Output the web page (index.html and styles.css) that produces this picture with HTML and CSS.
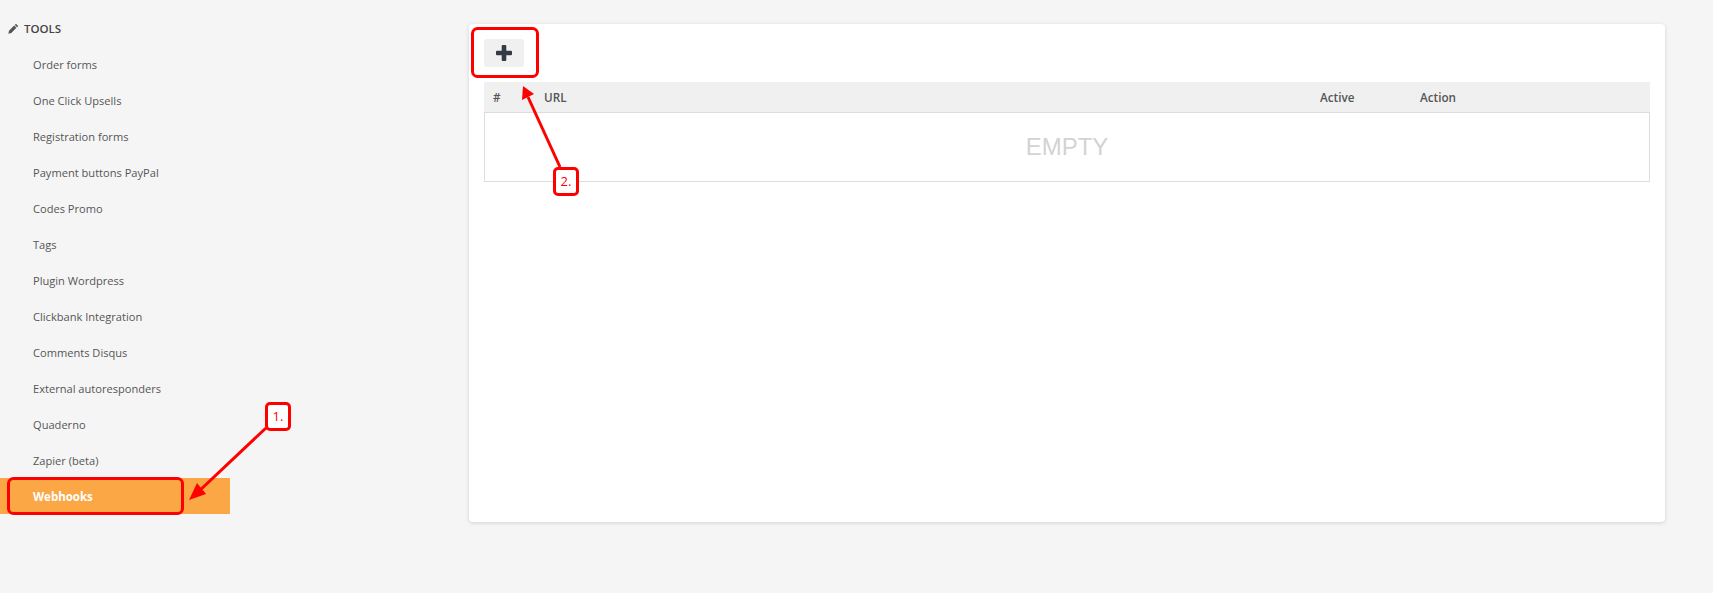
FILE: index.html
```html
<!DOCTYPE html>
<html lang="en">
<head>
  <meta charset="UTF-8">
  <title>Webhooks</title>
  <link rel="stylesheet" href="styles.css">
</head>
<body>
  <div class="page">
    <aside class="sidebar">
      <div class="side-title">
        <svg class="pencil" viewBox="0 0 12 12" width="11" height="11"><path d="M8.6.9l2.5 2.5-1.2 1.2-2.5-2.5zM6.7 2.8l2.500 2.500-5.600 5.600L.4 11.600l.7-3.200z" fill="#555"/></svg>
        TOOLS
      </div>
      <a class="side-item">Order forms</a>
      <a class="side-item">One Click Upsells</a>
      <a class="side-item">Registration forms</a>
      <a class="side-item">Payment buttons PayPal</a>
      <a class="side-item">Codes Promo</a>
      <a class="side-item">Tags</a>
      <a class="side-item">Plugin Wordpress</a>
      <a class="side-item">Clickbank Integration</a>
      <a class="side-item">Comments Disqus</a>
      <a class="side-item">External autoresponders</a>
      <a class="side-item">Quaderno</a>
      <a class="side-item">Zapier (beta)</a>
      <a class="side-item active">Webhooks</a>
    </aside>

    <main class="card">
      <button class="add-btn">
        <svg viewBox="0 0 16 16" width="16" height="16"><path d="M5.7 1a1 1 0 0 1 1-1h2.6a1 1 0 0 1 1 1v4.700h4.700a1 1 0 0 1 1 1v2.600a1 1 0 0 1-1 1h-4.700v4.700a1 1 0 0 1-1 1H6.700a1 1 0 0 1-1-1v-4.700H1a1 1 0 0 1-1-1V6.700a1 1 0 0 1 1-1h4.700z" fill="#333a45"/></svg>
      </button>
      <div class="hooks">
        <div class="hooks-head">
          <span class="col-num">#</span>
          <span class="col-url">URL</span>
          <span class="col-active">Active</span>
          <span class="col-action">Action</span>
        </div>
        <div class="hooks-empty">EMPTY</div>
      </div>
    </main>
  </div>

  <!-- red annotations drawn on top of the screenshot -->
  <svg class="marks" width="1713" height="593" viewBox="0 0 1713 593">
    <rect x="8.5" y="478.5" width="174" height="35" rx="5"/>
    <rect x="472.5" y="28.500" width="65" height="48" rx="5"/>
    <line x1="266" y1="428" x2="197" y2="493"/>
    <polygon class="head" points="189,500 197,483 206,494"/>
    <line x1="560" y1="167" x2="528" y2="97"/>
    <polygon class="head" points="523,86 534,94 522,100"/>
  </svg>
  <div class="note note-one">1.</div>
  <div class="note note-two">2.</div>
</body>
</html>
```

FILE: styles.css
```css
html, body {
  padding: 0;
  margin: 0;
}

body {
  background: #f5f5f5;
  font-family: "Open Sans", "Liberation Sans", sans-serif;
  font-size: 11.1px;
  color: #555;
  height: 593px;
  overflow: hidden;
}

.page {
  display: flex;
  align-items: flex-start;
}

.sidebar {
  width: 230px;
  margin-right: 239px;
  padding-top: 20px;
  flex: none;
}

.side-title {
  display: flex;
  align-items: center;
  gap: 5px;
  height: 17px;
  padding-left: 8px;
  margin-bottom: 9px;
  font-size: 11.5px;
  font-weight: 600;
  color: #444;
}

.side-item {
  display: flex;
  align-items: center;
  height: 36px;
  padding-left: 33px;
}

.side-item.active {
  background: #fba746;
  color: #fff;
  font-size: 11.5px;
  font-weight: 700;
}

.card {
  width: 1166px;
  height: 468px;
  margin-top: 24px;
  padding: 15px;
  background: #fff;
  border-radius: 4px;
  box-shadow: 0 1px 4px rgba(0, 0, 0, 0.14);
}

.add-btn {
  display: flex;
  align-items: center;
  justify-content: center;
  width: 40px;
  height: 28px;
  padding: 0;
  border: none;
  border-radius: 3px;
  background: #f0f0f0;
}

.hooks {
  margin-top: 15px;
}

.hooks-head {
  display: flex;
  align-items: center;
  height: 30px;
  background: #f0f0f0;
  font-size: 11.7px;
  font-weight: 600;
  color: #555;
}

.col-num {
  width: 60px;
  padding-left: 9px;
  box-sizing: border-box;
}

.col-url {
  width: 776px;
}

.col-active {
  width: 100px;
}

.hooks-empty {
  height: 68px;
  border: 1px solid #ddd;
  display: flex;
  align-items: center;
  justify-content: center;
  font-family: "Liberation Sans", sans-serif;
  font-size: 24px;
  color: #d3d3d3;
}

.marks {
  position: absolute;
  left: 0;
  top: 0;
  pointer-events: none;
}

.marks rect {
  fill: none;
  stroke: #f00;
  stroke-width: 3;
}

.marks line {
  stroke: #f00;
  stroke-width: 3;
}

.marks .head {
  fill: #f00;
}

.note {
  position: absolute;
  box-sizing: border-box;
  width: 26px;
  height: 29px;
  border: 3px solid #f00;
  border-radius: 5px;
  background: #fff;
  color: #f00;
  font-size: 13px;
  line-height: 23px;
  text-align: center;
}

.note-one {
  left: 265px;
  top: 402px;
}

.note-two {
  left: 553px;
  top: 167px;
}
```
